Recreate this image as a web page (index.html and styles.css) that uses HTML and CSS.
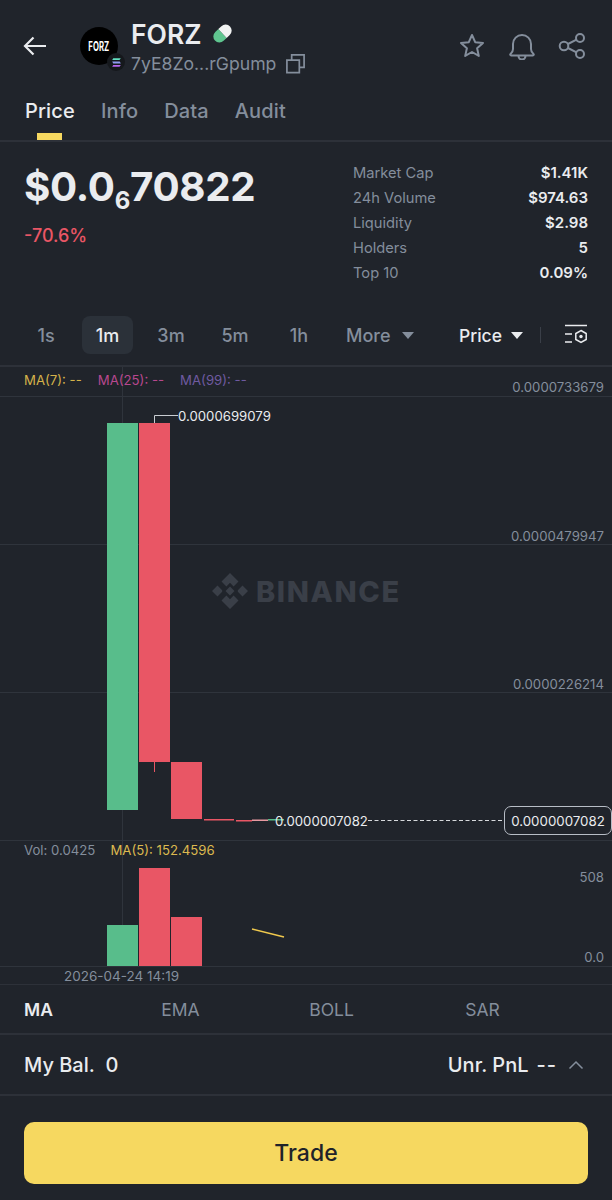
FILE: index.html
```html
<!DOCTYPE html>
<html lang="en">
<head>
<meta charset="utf-8">
<title>FORZ</title>
<link rel="stylesheet" href="styles.css">
</head>
<body>
<main class="page">
  <header class="top">
    <svg class="back" viewBox="0 0 24 20" width="24" height="20"><path d="M23 10H2M10.500 1.500 2 10l8.500 8.500" fill="none" stroke="#eaecef" stroke-width="2.200"/></svg>
    <div class="logo">
      <span class="logo-text">FORZ</span>
      <span class="chain"><svg viewBox="0 0 12 12" width="13" height="13"><path d="M3 2h7L8.800 3.800H2z" fill="#62e0c0"/><path d="M2 5.100h7l1 1.800H3z" fill="#8f9bf0"/><path d="M3 8.200h7L8.800 10H2z" fill="#b765f0"/></svg></span>
    </div>
    <div class="identity">
      <div class="name-row">
        <span class="name">FORZ</span>
        <svg class="pill" viewBox="0 0 20 20" width="21" height="21"><g transform="rotate(-43 10 10)"><path d="M10 4.200H6a5.800 5.800 0 0 0 0 11.600h4z" fill="#5fc58f"/><path d="M10 4.200h4a5.800 5.800 0 0 1 0 11.600h-4z" fill="#f1f3f2"/></g></svg>
      </div>
      <div class="addr-row">
        <span class="addr">7yE8Zo...rGpump</span>
        <svg viewBox="0 0 22 22" width="21" height="21" class="copy"><path d="M2 7.500h13v13H2zM7 7V2h13v13h-4.500" fill="none" stroke="#848e9c" stroke-width="1.800"/></svg>
      </div>
    </div>
    <div class="actions">
      <svg viewBox="0 0 28 28" width="28" height="28"><path d="m14 3 3.200 7.200 7.800.8-5.900 5.200 1.700 7.700L14 20l-6.800 3.900 1.700-7.700L3 11l7.800-.8z" fill="none" stroke="#848e9c" stroke-width="2" stroke-linejoin="round"/></svg>
      <svg viewBox="0 0 28 28" width="28" height="28"><path d="M2.500 22c2-1.500 2.500-3 2.500-5v-5a9 9 0 0 1 18 0v5c0 2 .5 3.500 2.500 5 .6.600.2 1.500-.6 1.500H3.100c-.8 0-1.200-.9-.6-1.500zM10.500 24a3.500 3.500 0 0 0 7 0" fill="none" stroke="#848e9c" stroke-width="2"/></svg>
      <svg viewBox="0 0 28 28" width="28" height="28"><circle cx="6" cy="14" r="4.300" fill="none" stroke="#848e9c" stroke-width="2"/><circle cx="22" cy="6" r="4" fill="none" stroke="#848e9c" stroke-width="2"/><circle cx="22" cy="22" r="4" fill="none" stroke="#848e9c" stroke-width="2"/><path d="m10 12 8.500-4.300M10 16l8.500 4.300" stroke="#848e9c" stroke-width="2"/></svg>
    </div>
  </header>

  <nav class="tabs">
    <span class="tab active">Price</span>
    <span class="tab">Info</span>
    <span class="tab">Data</span>
    <span class="tab">Audit</span>
  </nav>

  <section class="summary">
    <div class="price-block">
      <div class="price">$0.0<sub class="zeros">6</sub>70822</div>
      <div class="change">-70.6%</div>
    </div>
    <dl class="stats">
      <div class="stat"><dt>Market Cap</dt><dd>$1.41K</dd></div>
      <div class="stat"><dt>24h Volume</dt><dd>$974.63</dd></div>
      <div class="stat"><dt>Liquidity</dt><dd>$2.98</dd></div>
      <div class="stat"><dt>Holders</dt><dd>5</dd></div>
      <div class="stat"><dt>Top 10</dt><dd>0.09%</dd></div>
    </dl>
  </section>

  <div class="intervals">
    <span class="iv">1s</span>
    <span class="iv iv-on">1m</span>
    <span class="iv">3m</span>
    <span class="iv">5m</span>
    <span class="iv">1h</span>
    <span class="iv more">More <i class="caret caret-grey"></i></span>
    <span class="type">Price <i class="caret caret-white"></i></span>
    <span class="divider"></span>
    <svg viewBox="0 0 24 22" width="24" height="22" class="settings"><path d="M1 1.500h22M1 10h7M1 18h7" stroke="#eaecef" stroke-width="1.500"/><path d="m17 6.500 5.200 3v6l-5.200 3-5.200-3v-6z" fill="none" stroke="#eaecef" stroke-width="1.500"/><circle cx="17" cy="12.500" r="1.700" fill="#eaecef"/></svg>
  </div>

  <section class="chart">
    <svg class="plot" viewBox="0 0 612 619" width="612" height="619">
      <g stroke="#2f343c" stroke-width="1">
        <path d="M0 29.500H612M0 177.500H612M0 325.500H612M0 473.500H612M0 599.500H612M122.500 0V599"/>
      </g>
      <rect x="107" y="56" width="31" height="387" fill="#58bd8b"/>
      <rect x="139" y="56" width="31" height="339" fill="#e95665"/>
      <rect x="154" y="395" width="1" height="10" fill="#e95665"/>
      <rect x="171" y="395" width="31" height="57" fill="#e95665"/>
      <rect x="204" y="452" width="30" height="1.500" fill="#e95665"/>
      <rect x="236" y="453" width="16" height="1.500" fill="#e95665"/>
      <rect x="252" y="452.500" width="16" height="1.500" fill="#e79aa2"/>
      <rect x="268" y="452" width="16" height="1.500" fill="#58bd8b"/>
      <path d="M154.500 56V48.500H178" fill="none" stroke="#c9cdd2" stroke-width="1"/>
      <path d="M368 453.500H504" stroke="#d6d9dc" stroke-width="1" stroke-dasharray="4 2.500"/>
      <rect x="107" y="558" width="31" height="41" fill="#58bd8b"/>
      <rect x="139" y="501" width="31" height="98" fill="#e95665"/>
      <rect x="171" y="550" width="31" height="49" fill="#e95665"/>
      <path d="M252 562 284 570" stroke="#f0c94d" stroke-width="1.500"/>
    </svg>

    <div class="ma-row">
      <span class="ma-y">MA(7): --</span>
      <span class="ma-p">MA(25): --</span>
      <span class="ma-v">MA(99): --</span>
    </div>
    <span class="axis ax1">0.0000733679</span>
    <span class="axis ax2">0.0000479947</span>
    <span class="axis ax3">0.0000226214</span>
    <span class="axis ax4">508</span>
    <span class="axis ax5">0.0</span>
    <span class="high">0.0000699079</span>
    <span class="last">0.0000007082</span>
    <span class="tag">0.0000007082</span>
    <div class="watermark">
      <svg viewBox="0 0 38 38" width="38" height="38"><path d="M19 1 27.500 9.500 22.600 14.400 19 10.800 15.400 14.400 10.500 9.500zM6.500 13.500l4.900 4.900-.6.600.6.600-4.900 4.900L1 19zM31.500 13.500 37 19l-5.500 5.500-4.900-4.900.6-.6-.6-.6zM19 14.500l4.500 4.500-4.500 4.500-4.500-4.500zM10.500 28.500l4.900-4.900 3.600 3.600 3.600-3.600 4.900 4.900L19 37z" fill="#3a3f48"/></svg>
      <span class="wm-text">BINANCE</span>
    </div>
    <div class="vol-row">
      <span class="vol">Vol: 0.0425</span>
      <span class="vol-ma">MA(5): 152.4596</span>
    </div>
    <span class="time">2026-04-24 14:19</span>
  </section>

  <div class="indicators">
    <span class="ind ind-on">MA</span>
    <span class="ind">EMA</span>
    <span class="ind">BOLL</span>
    <span class="ind">SAR</span>
  </div>

  <div class="balance">
    <span class="bal">My Bal.&nbsp; 0</span>
    <span class="pnl">Unr. PnL <span class="dashes">--</span>
      <svg viewBox="0 0 16 10" width="16" height="10"><path d="m1.500 8.500 6.500-6.500 6.500 6.500" fill="none" stroke="#848e9c" stroke-width="1.500"/></svg>
    </span>
  </div>

  <div class="trade-wrap"><button class="trade">Trade</button></div>
</main>
</body>
</html>
```
FILE: styles.css
```css
* { box-sizing: border-box; margin: 0; padding: 0; }
html, body { background: #20242b; }
body { font-family: Inter, "Liberation Sans", sans-serif; color: #eaecef; width: 612px; height: 1200px; overflow: hidden; }
.page { display: flex; flex-direction: column; width: 612px; height: 1200px; }

.top { height: 92px; display: flex; align-items: center; padding: 0 26px 0 23px; position: relative; }
.back { flex: none; margin-right: 33px; }
.logo { position: relative; width: 38px; height: 38px; background: #000; border-radius: 50%; display: flex; align-items: center; justify-content: center; flex: none; margin-right: 13px; }
.logo-text { font-size: 12.500px; font-weight: 700; color: #fff; transform: scaleX(.62); }
.chain { position: absolute; right: -7px; bottom: -6px; width: 18px; height: 18px; border-radius: 50%; background: #15181c; display: flex; align-items: center; justify-content: center; }
.identity { flex: 1; display: flex; flex-direction: column; gap: 3px; margin-top: -1px; }
.name-row { display: flex; align-items: center; gap: 10px; height: 32px; }
.name { font-size: 26.500px; font-weight: 600; color: #eaecef; }
.pill { flex: none; }
.addr-row { display: flex; align-items: center; gap: 9px; }
.addr { font-size: 17.600px; color: #848e9c; }
.actions { display: flex; gap: 22px; align-items: center; }

.tabs { height: 50px; display: flex; gap: 26px; padding: 7px 25px 0; border-bottom: 2px solid #2d3139; align-items: flex-start; }
.tab { position: relative; font-size: 20px; font-weight: 500; color: #848e9c; line-height: 24px; letter-spacing: .15px; }
.tab.active { color: #eaecef; }
.tab.active::after { content: ""; position: absolute; left: 12px; width: 25px; height: 7px; top: 34px; background: #f6d860; }

.summary { height: 156px; display: flex; justify-content: space-between; padding: 20px 24px 0; }
.price { font-size: 40.300px; font-weight: 700; line-height: 50px; letter-spacing: -.3px; }
.zeros { font-size: 24px; vertical-align: -8px; line-height: 0; }
.change { font-size: 18px; color: #e95665; margin-top: 13px; font-weight: 500; }
.stats { width: 235px; display: flex; flex-direction: column; margin-top: -2px; }
.stat { display: flex; justify-content: space-between; height: 25px; align-items: center; font-size: 14.700px; }
.stat dt { color: #848e9c; }
.stat dd { font-weight: 600; font-size: 15px; color: #eaecef; }

.intervals { height: 69px; display: flex; align-items: center; padding: 7px 24px 0 23px; border-bottom: 2px solid #2d3139; font-size: 18px; color: #848e9c; }
.iv { width: 46px; height: 38px; display: flex; align-items: center; justify-content: center; margin-right: 18px; border-radius: 8px; font-weight: 500; }
.iv-on { background: #2b3139; color: #eaecef; width: 51px; margin-right: 15px; margin-left: -5px; }
.more { width: auto; margin: 0 0 0 6px; gap: 11px; }
.type { margin-left: auto; display: flex; align-items: center; gap: 9px; color: #eaecef; font-weight: 500; font-size: 17.500px; }
.caret { display: inline-block; width: 0; height: 0; border-left: 6px solid transparent; border-right: 6px solid transparent; border-top: 7px solid; }
.caret-grey { color: #848e9c; }
.caret-white { color: #eaecef; }
.divider { width: 1px; height: 16px; background: #3a3f48; margin: 0 23px 0 17px; }
.settings { flex: none; }

.chart { position: relative; height: 618px; border-bottom: 1px solid #2d3139; flex: none; }
.plot { position: absolute; left: 0; top: 0; display: block; }
.ma-row { position: absolute; left: 24px; top: 5px; display: flex; gap: 16px; font-size: 13.200px; }
.ma-y { color: #d4b24a; }
.ma-p { color: #b8488f; }
.ma-v { color: #6f5aa0; }
.axis { position: absolute; right: 8px; font-size: 13.200px; color: #848e9c; line-height: 16px; }
.ax1 { top: 12px; }
.ax2 { top: 161px; }
.ax3 { top: 309px; }
.ax4 { top: 502px; }
.ax5 { top: 582px; }
.high { position: absolute; left: 178px; top: 41px; font-size: 13.200px; color: #eaecef; line-height: 16px; }
.last { position: absolute; left: 275px; top: 446px; font-size: 13.200px; color: #eaecef; line-height: 16px; }
.tag { position: absolute; right: 0; top: 439px; width: 108px; height: 29px; border: 1px solid #b7bdc6; border-radius: 7px; background: #20242b; font-size: 13.300px; display: flex; align-items: center; justify-content: center; color: #eaecef; }
.watermark { position: absolute; left: 211px; top: 205px; display: flex; align-items: center; gap: 7px; }
.wm-text { font-size: 29px; font-weight: 800; color: #3a3f48; letter-spacing: 1.600px; }
.vol-row { position: absolute; left: 24px; top: 475px; display: flex; gap: 15px; font-size: 13.200px; line-height: 16px; }
.vol { color: #848e9c; }
.vol-ma { color: #dcb94f; }
.time { position: absolute; left: 64px; top: 601px; font-size: 13.500px; color: #848e9c; line-height: 16px; }

.indicators { height: 50px; display: flex; align-items: center; border-bottom: 2px solid #2d3139; padding: 0 0 0 24px; font-size: 17.500px; color: #848e9c; flex: none; }
.ind { width: 151px; text-align: center; }
.ind-on { color: #eaecef; font-weight: 600; width: 81px; text-align: left; }

.balance { height: 61px; display: flex; align-items: center; justify-content: space-between; padding: 1px 28px 0 24px; border-bottom: 2px solid #2d3139; font-size: 20px; font-weight: 500; flex: none; }
.pnl { display: flex; align-items: center; gap: 8px; }
.dashes { letter-spacing: 1px; }
.pnl svg { margin-left: 3px; }

.trade-wrap { padding: 26px 24px 0; }
.trade { width: 100%; height: 62px; background: #f6d860; color: #1f2329; border: 0; border-radius: 10px; font-family: Inter, "Liberation Sans", sans-serif; font-size: 23px; font-weight: 500; }
```
